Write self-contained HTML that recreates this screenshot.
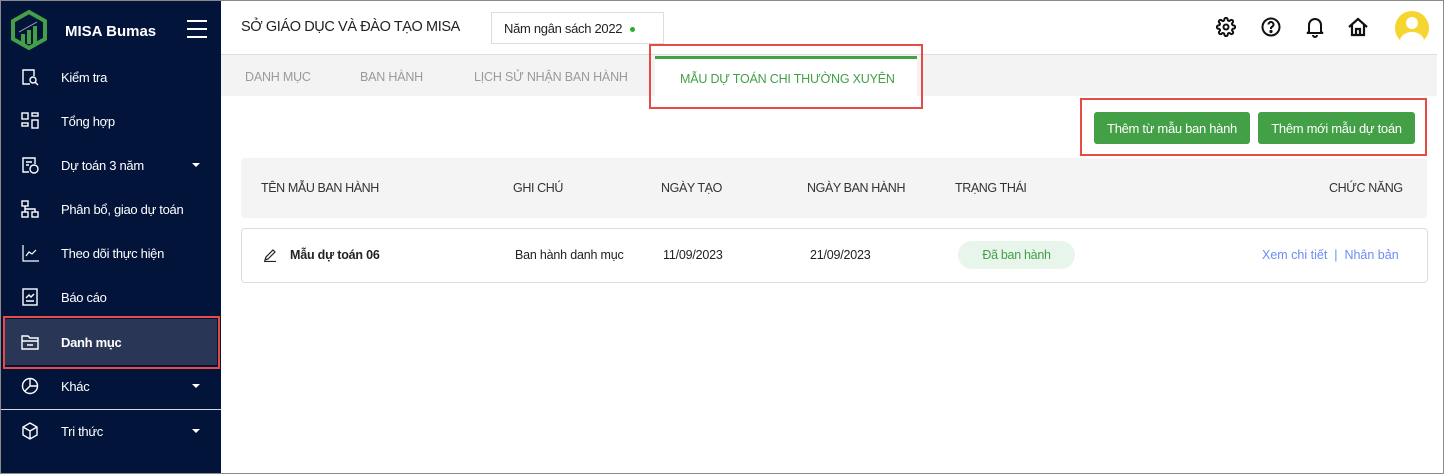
<!DOCTYPE html>
<html><head><meta charset="utf-8">
<style>
*{box-sizing:border-box;margin:0;padding:0}
body{width:1444px;height:474px;overflow:hidden;background:#fff;font-family:"Liberation Sans",sans-serif;position:relative}
.frame{position:absolute;left:0;top:0;width:1444px;height:474px;border:1px solid #8a8a8a;pointer-events:none;z-index:10}
.sb{position:absolute;left:0;top:0;width:221px;height:474px;background:#02143a;color:#fff}
.abs{position:absolute}
.item{position:absolute;left:0;width:221px;height:44px;display:flex;align-items:center;font-size:13px;letter-spacing:-0.3px}
.item svg{position:absolute;left:21px}
.item span{position:absolute;left:61px}
.caret{position:absolute;left:192px;width:0;height:0;border-left:4px solid transparent;border-right:4px solid transparent;border-top:4px solid #fff}
.red{position:absolute;border:2px solid #e84b45}
.tab{position:absolute;top:70px;font-size:12.5px;color:#9a9a9a;letter-spacing:-0.2px}
.th{position:absolute;top:181px;font-size:12.5px;color:#333;letter-spacing:-0.4px}
.td{position:absolute;top:248px;font-size:12.5px;color:#222;letter-spacing:-0.2px}
.btn{position:absolute;top:112px;height:32px;background:#43a047;color:#fff;border-radius:3px;font-size:13px;display:flex;align-items:center;justify-content:center;letter-spacing:-0.3px}
</style></head><body>
<div class="sb">
  <svg class="abs" style="left:10px;top:10px" width="38" height="40" viewBox="0 0 38 40"><path d="M19 2 L35 11 V29 L19 38 L3 29 V11 Z" fill="none" stroke="#43a047" stroke-width="4"/><rect x="11" y="24" width="4" height="10" fill="#43a047"/><rect x="17" y="20" width="4" height="14" fill="#43a047"/><rect x="23" y="16" width="4" height="18" fill="#43a047"/><path d="M9 22 L18 17 L27 12" stroke="#aaa" stroke-width="1" fill="none"/></svg>
  <div class="abs" style="left:65px;top:23px;font-size:15px;font-weight:bold">MISA Bumas</div>
  <div class="abs" style="left:187px;top:20px;width:20px;height:2px;background:#fff"></div>
  <div class="abs" style="left:187px;top:28px;width:20px;height:2px;background:#fff"></div>
  <div class="abs" style="left:187px;top:36px;width:20px;height:2px;background:#fff"></div>

  <div class="item" style="top:55px"><svg width="18" height="18" viewBox="0 0 18 18" fill="none" stroke="#fff" stroke-width="1.4"><path d="M9 16H2V2h11v6"/><circle cx="12" cy="12" r="3"/><path d="M14 14l3 3"/></svg><span>Kiểm tra</span></div>
  <div class="item" style="top:99px"><svg width="18" height="18" viewBox="0 0 18 18" fill="none" stroke="#fff" stroke-width="1.4"><rect x="1" y="1" width="6" height="6"/><rect x="11" y="1" width="6" height="3"/><rect x="1" y="11" width="6" height="3"/><rect x="11" y="8" width="6" height="8"/></svg><span>Tổng hợp</span></div>
  <div class="item" style="top:143px"><svg width="18" height="18" viewBox="0 0 18 18" fill="none" stroke="#fff" stroke-width="1.4"><path d="M8 16H2V2h12v6"/><path d="M5 6h6M5 9h3"/><circle cx="13" cy="13" r="4"/></svg><span>Dự toán 3 năm</span><div class="caret" style="top:20px"></div></div>
  <div class="item" style="top:187px"><svg width="18" height="18" viewBox="0 0 18 18" fill="none" stroke="#fff" stroke-width="1.4"><rect x="1" y="1" width="6" height="5"/><rect x="1" y="12" width="6" height="5"/><rect x="11" y="12" width="6" height="5"/><path d="M4 6v6M4 9h10v3"/></svg><span>Phân bổ, giao dự toán</span></div>
  <div class="item" style="top:231px"><svg width="18" height="18" viewBox="0 0 18 18" fill="none" stroke="#fff" stroke-width="1.2"><path d="M2 1v16h16"/><path d="M5 12l3-4 3 2 4-4"/></svg><span>Theo dõi thực hiện</span></div>
  <div class="item" style="top:275px"><svg width="18" height="18" viewBox="0 0 18 18" fill="none" stroke="#fff" stroke-width="1.4"><rect x="2" y="1" width="14" height="16"/><path d="M5 13h8M5 10l3-3 2 2 3-3"/></svg><span>Báo cáo</span></div>
  <div class="abs" style="left:5px;top:319px;width:212px;height:46px;background:#2a3656"></div>
  <div class="item" style="top:320px;font-weight:bold"><svg width="18" height="18" viewBox="0 0 18 18" fill="none" stroke="#fff" stroke-width="1.4"><path d="M1 3h6l2 2h8v11H1z"/><path d="M1 8h16M6 12h6"/></svg><span>Danh mục</span></div>
  <div class="item" style="top:364px"><svg width="18" height="18" viewBox="0 0 18 18" fill="none" stroke="#fff" stroke-width="1.4"><circle cx="9" cy="9" r="7.5"/><path d="M9 1.5V9h7.5M9 9l-5 5"/></svg><span>Khác</span><div class="caret" style="top:20px"></div></div>
  <div class="abs" style="left:0;top:409px;width:221px;height:1px;background:#d8d8d8"></div>
  <div class="item" style="top:409px"><svg width="18" height="18" viewBox="0 0 18 18" fill="none" stroke="#fff" stroke-width="1.4"><path d="M9 1l7 4v8l-7 4-7-4V5z"/><path d="M2 5l7 4 7-4M9 9v8"/></svg><span>Tri thức</span><div class="caret" style="top:20px"></div></div>
</div>
<div class="red" style="left:3px;top:316px;width:217px;height:53px"></div>

<!-- header -->
<div class="abs" style="left:241px;top:19px;font-size:14.5px;color:#222;letter-spacing:-0.4px">SỞ GIÁO DỤC VÀ ĐÀO TẠO MISA</div>
<div class="abs" style="left:491px;top:12px;width:173px;height:32px;border:1px solid #ddd;font-size:13px;color:#222;padding:8px 0 0 12px;letter-spacing:-0.3px">Năm ngân sách 2022 <span style="display:inline-block;width:5px;height:5px;border-radius:50%;background:#2bb02b;margin-left:4px;vertical-align:middle"></span></div>
<svg class="abs" style="left:1216px;top:17px" width="20" height="20" viewBox="0 0 24 24" fill="none" stroke="#111" stroke-width="2.4"><circle cx="12" cy="12" r="3"/><path d="M19.4 15a1.7 1.7 0 0 0 .3 1.8l.1.1a2 2 0 1 1-2.8 2.8l-.1-.1a1.7 1.7 0 0 0-1.8-.3 1.7 1.7 0 0 0-1 1.5V21a2 2 0 1 1-4 0v-.1a1.7 1.7 0 0 0-1.1-1.5 1.7 1.7 0 0 0-1.8.3l-.1.1a2 2 0 1 1-2.8-2.8l.1-.1a1.7 1.7 0 0 0 .3-1.8 1.7 1.7 0 0 0-1.5-1H3a2 2 0 1 1 0-4h.1a1.7 1.7 0 0 0 1.5-1.1 1.7 1.7 0 0 0-.3-1.8l-.1-.1a2 2 0 1 1 2.8-2.8l.1.1a1.7 1.7 0 0 0 1.8.3H9a1.7 1.7 0 0 0 1-1.5V3a2 2 0 1 1 4 0v.1a1.7 1.7 0 0 0 1 1.5 1.7 1.7 0 0 0 1.8-.3l.1-.1a2 2 0 1 1 2.8 2.8l-.1.1a1.7 1.7 0 0 0-.3 1.8V9a1.7 1.7 0 0 0 1.5 1H21a2 2 0 1 1 0 4h-.1a1.7 1.7 0 0 0-1.5 1z"/></svg>
<svg class="abs" style="left:1261px;top:17px" width="20" height="20" viewBox="0 0 20 20" fill="none" stroke="#111" stroke-width="2"><circle cx="10" cy="10" r="8.5"/><path d="M7.5 7.5a2.5 2.5 0 1 1 3.5 2.3c-.7.3-1 .8-1 1.5v.7"/><circle cx="10" cy="14.5" r=".6" fill="#111"/></svg>
<svg class="abs" style="left:1306px;top:17px" width="18" height="21" viewBox="0 0 18 21" fill="none" stroke="#111" stroke-width="2"><path d="M3 15V8a6 6 0 0 1 12 0v7l2 1H1z"/><path d="M7 18a2 2 0 0 0 4 0"/></svg>
<svg class="abs" style="left:1348px;top:17px" width="20" height="20" viewBox="0 0 20 20" fill="none" stroke="#111" stroke-width="2.2"><path d="M1 10L10 2l9 8"/><path d="M4 8v10h12V8"/><path d="M8 18v-6h4v6"/></svg>
<div class="abs" style="left:1395px;top:11px;width:34px;height:34px;border-radius:50%;background:#f5d530;overflow:hidden"><div class="abs" style="left:11px;top:6px;width:12px;height:12px;border-radius:50%;background:#fff"></div><div class="abs" style="left:5px;top:21px;width:24px;height:18px;border-radius:50%;background:#fff"></div></div>

<!-- tabs -->
<div class="abs" style="left:221px;top:54px;width:1216px;height:1px;background:#ddd"></div>
<div class="abs" style="left:221px;top:55px;width:1216px;height:41px;background:#f3f3f3"></div>
<div class="tab" style="left:245px">DANH MỤC</div>
<div class="tab" style="left:360px">BAN HÀNH</div>
<div class="tab" style="left:474px">LỊCH SỬ NHẬN BAN HÀNH</div>
<div class="abs" style="left:655px;top:56px;width:262px;height:40px;background:#fff;border-top:3px solid #43a047"></div>
<div class="tab" style="left:680px;top:72px;color:#43a047">MẪU DỰ TOÁN CHI THƯỜNG XUYÊN</div>
<div class="red" style="left:649px;top:44px;width:274px;height:65px"></div>

<!-- buttons -->
<div class="btn" style="left:1094px;width:156px">Thêm từ mẫu ban hành</div>
<div class="btn" style="left:1258px;width:157px">Thêm mới mẫu dự toán</div>
<div class="red" style="left:1080px;top:98px;width:347px;height:58px"></div>

<!-- table -->
<div class="abs" style="left:241px;top:158px;width:1186px;height:60px;background:#f4f4f4;border-radius:4px"></div>
<div class="th" style="left:261px">TÊN MẪU BAN HÀNH</div>
<div class="th" style="left:513px">GHI CHÚ</div>
<div class="th" style="left:661px">NGÀY TẠO</div>
<div class="th" style="left:807px">NGÀY BAN HÀNH</div>
<div class="th" style="left:955px">TRẠNG THÁI</div>
<div class="th" style="left:1329px">CHỨC NĂNG</div>

<div class="abs" style="left:241px;top:228px;width:1187px;height:55px;border:1px solid #dcdde2;border-radius:4px"></div>
<svg class="abs" style="left:263px;top:248px" width="14" height="14" viewBox="0 0 14 14" fill="none" stroke="#222" stroke-width="1.2"><path d="M2 12l1-3 7-7 2 2-7 7z"/><path d="M1 13.5h12"/></svg>
<div class="td" style="left:290px;font-weight:bold">Mẫu dự toán 06</div>
<div class="td" style="left:515px">Ban hành danh mục</div>
<div class="td" style="left:663px">11/09/2023</div>
<div class="td" style="left:810px">21/09/2023</div>
<div class="abs" style="left:958px;top:241px;width:117px;height:28px;border-radius:14px;background:#e8f5ea;color:#43a047;font-size:12.5px;display:flex;align-items:center;justify-content:center;letter-spacing:-0.3px">Đã ban hành</div>
<div class="td" style="left:1262px;color:#6b8cf5;letter-spacing:0">Xem chi tiết &nbsp;|&nbsp; Nhân bản</div>

<div class="frame"></div>
</body></html>
